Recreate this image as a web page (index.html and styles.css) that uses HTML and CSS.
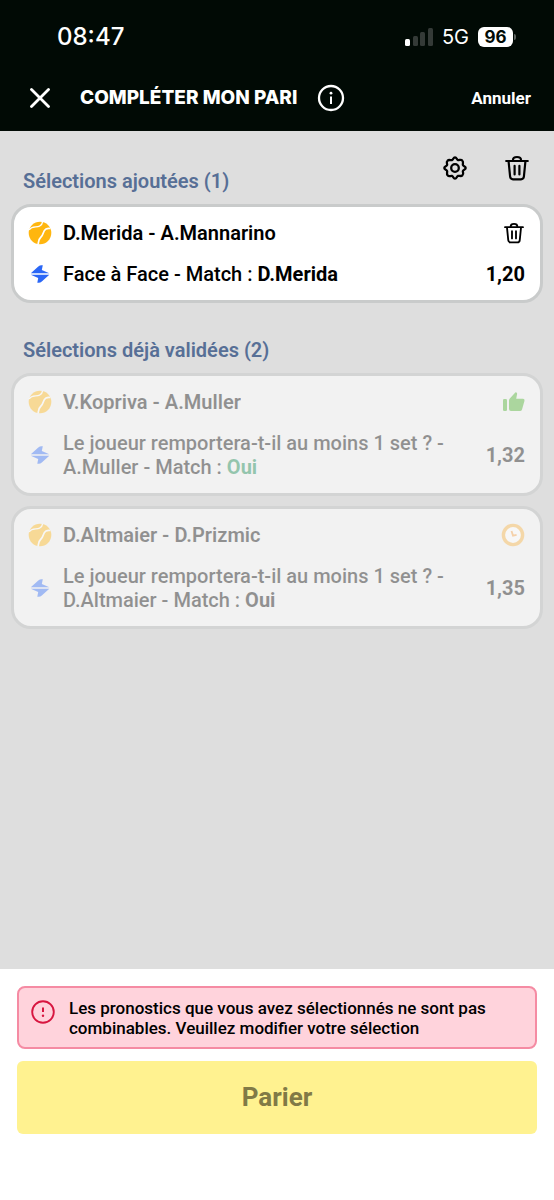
FILE: index.html
```html
<!DOCTYPE html>
<html lang="fr">
<head>
<meta charset="utf-8">
<meta name="viewport" content="width=device-width, initial-scale=1">
<title>Compléter mon pari</title>
<link rel="stylesheet" href="styles.css">
</head>
<body>
<svg class="sprite" aria-hidden="true">
  <symbol id="ball" viewBox="0 0 24 24">
    <circle cx="12" cy="12" r="11.300" fill="#ffb60f"/>
    <path d="M1 8.800C4 4.800 8 6.600 11.500 5.200C13.800 4.200 14.300 2.800 14.500 1" fill="none" stroke="#fff" stroke-width="1.400"/>
    <path d="M10.200 23.300C10.600 19.500 10.400 18.300 12.600 16.500C15.800 14 14.600 9.800 18 8C19.600 7.200 21.200 7.200 22.300 7.500" fill="none" stroke="#fff" stroke-width="1.700"/>
  </symbol>
  <symbol id="bolt" viewBox="0 0 20 20">
    <path d="M12.800 1.200L11.800 6L19.300 9.300H.8L8.300 2.500Q9.800 1.200 11.500 1.200ZM.8 10.700H19.300L11.800 17.500Q10.400 18.800 8.700 18.800H7.300L8.200 14Z" fill="#2b67f6"/>
  </symbol>
  <symbol id="trash" viewBox="0 0 24 26">
    <path d="M1.200 6H22.800M8 5.800V5Q8 2 12 2T16 5V5.800M3.600 6.500L5.100 21.500Q5.400 24.300 8 24.300H16Q18.600 24.300 18.900 21.500L20.400 6.500M9.600 10.800V19.500M14.400 10.800V19.500" fill="none" stroke="#000" stroke-width="2.200" stroke-linecap="round"/>
  </symbol>
</svg>

<div class="screen">
  <header class="top">
    <div class="status">
      <span class="time">08:47</span>
      <span class="status-right">
        <svg class="signal" viewBox="0 0 28 18" aria-hidden="true">
          <rect x="0" y="11" width="5" height="7" rx="1.500" fill="#fff"/>
          <rect x="8" y="8" width="5" height="10" rx="1.500" fill="#343a37"/>
          <rect x="15" y="4" width="5" height="14" rx="1.500" fill="#343a37"/>
          <rect x="23" y="0" width="5" height="18" rx="1.500" fill="#343a37"/>
        </svg>
        <span class="network">5G</span>
        <span class="battery"><span class="level">96</span><span class="cap"></span></span>
      </span>
    </div>
    <div class="bar">
      <button class="icon-btn close" type="button" aria-label="Fermer">
        <svg viewBox="0 0 20 20" width="20" height="20"><path d="M1.500 1.500L18.500 18.500M18.500 1.500L1.500 18.500" stroke="#fff" stroke-width="2.800" stroke-linecap="round"/></svg>
      </button>
      <h1 class="title">COMPLÉTER MON PARI</h1>
      <button class="icon-btn" type="button" aria-label="Informations">
        <svg viewBox="0 0 28 28" width="28" height="28"><circle cx="14" cy="14" r="12" fill="none" stroke="#fff" stroke-width="2.300"/><circle cx="14" cy="9.200" r="1.400" fill="#fff"/><path d="M14 12.500V20" stroke="#fff" stroke-width="2"/></svg>
      </button>
      <button class="cancel" type="button">Annuler</button>
    </div>
  </header>

  <main class="content">
    <section>
      <div class="section-head">
        <h2 class="heading">Sélections ajoutées (1)</h2>
        <div class="tools">
          <button class="icon-btn" type="button" aria-label="Réglages">
            <svg viewBox="0 0 24 24" width="24" height="26" fill="none" stroke="#000" stroke-width="2.300" stroke-linejoin="round"><path d="M12 1.300C13.800 1.300 13.600 3.700 15 4.100C16.300 4.500 17.800 2.800 19.200 4.500C20.900 6 19.500 7.500 19.900 9C20.300 10.400 22.700 10.200 22.700 12C22.700 13.800 20.300 13.600 19.900 15C19.500 16.300 21.200 17.800 19.500 19.200C18 20.900 16.500 19.500 15 19.900C13.600 20.300 13.800 22.700 12 22.700C10.200 22.700 10.400 20.300 9 19.900C7.700 19.500 6.200 21.200 4.800 19.500C3.100 18 4.500 16.500 4.100 15C3.700 13.600 1.300 13.800 1.300 12C1.300 10.200 3.700 10.400 4.100 9C4.500 7.700 2.800 6.200 4.500 4.800C6 3.100 7.500 4.500 9 4.100C10.400 3.700 10.200 1.300 12 1.300Z"/><circle cx="12" cy="12" r="3.800"/></svg>
          </button>
          <button class="icon-btn" type="button" aria-label="Tout supprimer"><svg width="24" height="26"><use href="#trash"/></svg></button>
        </div>
      </div>
      <article class="card">
        <svg class="ball"><use href="#ball"/></svg>
        <h3 class="match">D.Merida - A.Mannarino</h3>
        <button class="icon-btn end" type="button" aria-label="Supprimer"><svg width="20" height="22"><use href="#trash"/></svg></button>
        <svg class="bolt"><use href="#bolt"/></svg>
        <p class="bet">Face à Face - Match : <strong>D.Merida</strong></p>
        <span class="odds">1,20</span>
      </article>
    </section>

    <section class="validated">
      <h2 class="heading">Sélections déjà validées (2)</h2>
      <div class="cards">
        <article class="card locked">
          <svg class="ball"><use href="#ball"/></svg>
          <h3 class="match">V.Kopriva - A.Muller</h3>
          <svg class="end" viewBox="0 0 22 20" width="22" height="20" role="img" aria-label="Gagné"><rect x="0" y="7" width="4" height="12" rx="1.200" fill="#42ae22"/><path d="M6 8.500Q6 7.300 6.800 6.500L12.300.6Q13 0 13.700.7Q14.200 1.200 14.100 2L13.200 6.800H20Q21.800 6.800 21.500 8.700L19 17.500Q18.500 19 17 19H8Q6 19 6 17Z" fill="#42ae22"/></svg>
          <svg class="bolt"><use href="#bolt"/></svg>
          <p class="bet">Le joueur remportera-t-il au moins 1 set ? - A.Muller - Match : <strong class="won">Oui</strong></p>
          <span class="odds">1,32</span>
        </article>
        <article class="card locked">
          <svg class="ball"><use href="#ball"/></svg>
          <h3 class="match">D.Altmaier - D.Prizmic</h3>
          <svg class="end" viewBox="0 0 24 24" width="24" height="24" role="img" aria-label="En attente"><circle cx="12" cy="12" r="9.600" fill="#fff" stroke="#f9b13c" stroke-width="3.400"/><path d="M10.500 8L12 12.600L15.600 11.800" fill="none" stroke="#f9a040" stroke-width="1.800"/></svg>
          <svg class="bolt"><use href="#bolt"/></svg>
          <p class="bet">Le joueur remportera-t-il au moins 1 set ? - D.Altmaier - Match : <strong>Oui</strong></p>
          <span class="odds">1,35</span>
        </article>
      </div>
    </section>
  </main>

  <footer class="footer">
    <div class="alert" role="alert">
      <svg class="alert-icon" viewBox="0 0 24 24" aria-hidden="true"><circle cx="12" cy="12" r="10.800" fill="none" stroke="#d81640" stroke-width="1.900"/><path d="M12 7.500V12" stroke="#d81640" stroke-width="2"/><circle cx="12" cy="15.800" r="1.200" fill="#d81640"/></svg>
      <p class="alert-text">Les pronostics que vous avez sélectionnés ne sont pas combinables. Veuillez modifier votre sélection</p>
    </div>
    <button class="submit" type="button" disabled>Parier</button>
  </footer>
</div>
</body>
</html>
```

FILE: styles.css
```css
* { box-sizing: border-box; }

body {
  margin: 0;
  font-family: Roboto, "Liberation Sans", sans-serif;
  font-size: 20px;
  line-height: 24px;
  color: #000;
}

h1, h2, h3, p { margin: 0; }

button {
  border: 0;
  padding: 0;
  background: none;
  font-family: inherit;
}

svg { display: block; }

.sprite { position: absolute; width: 0; height: 0; }

.screen {
  display: flex;
  flex-direction: column;
  min-height: 100vh;
  background: #dedede;
}

.top { background: #010a05; color: #fff; }

.status {
  display: flex;
  align-items: center;
  justify-content: space-between;
  padding: 25px 38px 0 57px;
  font-family: Inter, "Liberation Sans", sans-serif;
}

.time { font-size: 24px; font-weight: 500; }

.status-right { display: flex; align-items: center; }

.signal { width: 28px; height: 18px; }

.network { margin: 0 9px; font-size: 20px; }

.battery { display: flex; align-items: center; gap: 1px; }

.level {
  width: 35px;
  border-radius: 6px;
  background: #fff;
  color: #010a05;
  font-size: 17px;
  font-weight: 700;
  line-height: 20px;
  text-align: center;
}

.cap {
  width: 2px;
  height: 6px;
  border-radius: 0 2px 2px 0;
  background: #5a605d;
}

.bar {
  display: flex;
  align-items: center;
  padding: 35px 23px 19px 30px;
}

.icon-btn { display: flex; }

.close { margin-right: 30px; }

.title {
  margin-right: 20px;
  font-family: Inter, "Liberation Sans", sans-serif;
  font-size: 19px;
  font-weight: 800;
}

.cancel {
  margin-left: auto;
  color: #fff;
  font-size: 17px;
  font-weight: 700;
}

.content { flex: 1; padding: 0 11px; }

.section-head {
  display: flex;
  justify-content: space-between;
  padding: 24px 14px 11px 12px;
}

.section-head .heading { padding-top: 14px; }

.heading { color: #576f96; font-size: 20px; font-weight: 600; }

.tools { display: flex; align-items: flex-start; gap: 38px; }

.card {
  display: grid;
  grid-template-columns: 24px 1fr auto;
  align-items: center;
  gap: 17px 11px;
  padding: 14px 15px 14px 14px;
  border: 3px solid #c9cbcb;
  border-radius: 20px;
  background: #fff;
}

.ball { width: 24px; height: 24px; }

.bolt { width: 20px; height: 20px; justify-self: center; }

.match { font-size: 20px; font-weight: 600; }

.end { justify-self: end; }

.icon-btn.end { padding: 0 1px; }

.bet { font-weight: 500; }

.bet strong { font-weight: 700; }

.odds { font-weight: 700; }

.validated { padding-top: 35px; }

.validated .heading { padding: 0 12px 11px; }

.cards { display: flex; flex-direction: column; gap: 10px; }

.locked { border-color: #d3d4d4; background: #f2f2f2; }

.locked > * { opacity: 0.4; }

.won { color: #068348; }

.footer {
  display: flex;
  flex-direction: column;
  gap: 12px;
  padding: 17px 17px 66px;
  background: #fff;
}

.alert {
  display: flex;
  gap: 14px;
  padding: 10px 11px 9px 12px;
  border: 2px solid #f58ba3;
  border-radius: 8px;
  background: #ffd3dc;
}

.alert-icon { flex: none; width: 24px; height: 24px; margin-top: 2px; }

.alert-text { font-size: 17px; font-weight: 500; line-height: 20px; }

.submit {
  padding: 24px;
  border-radius: 6px;
  background: #fff290;
  color: #817a46;
  font-size: 26px;
  font-weight: 700;
  line-height: 25px;
}
```
